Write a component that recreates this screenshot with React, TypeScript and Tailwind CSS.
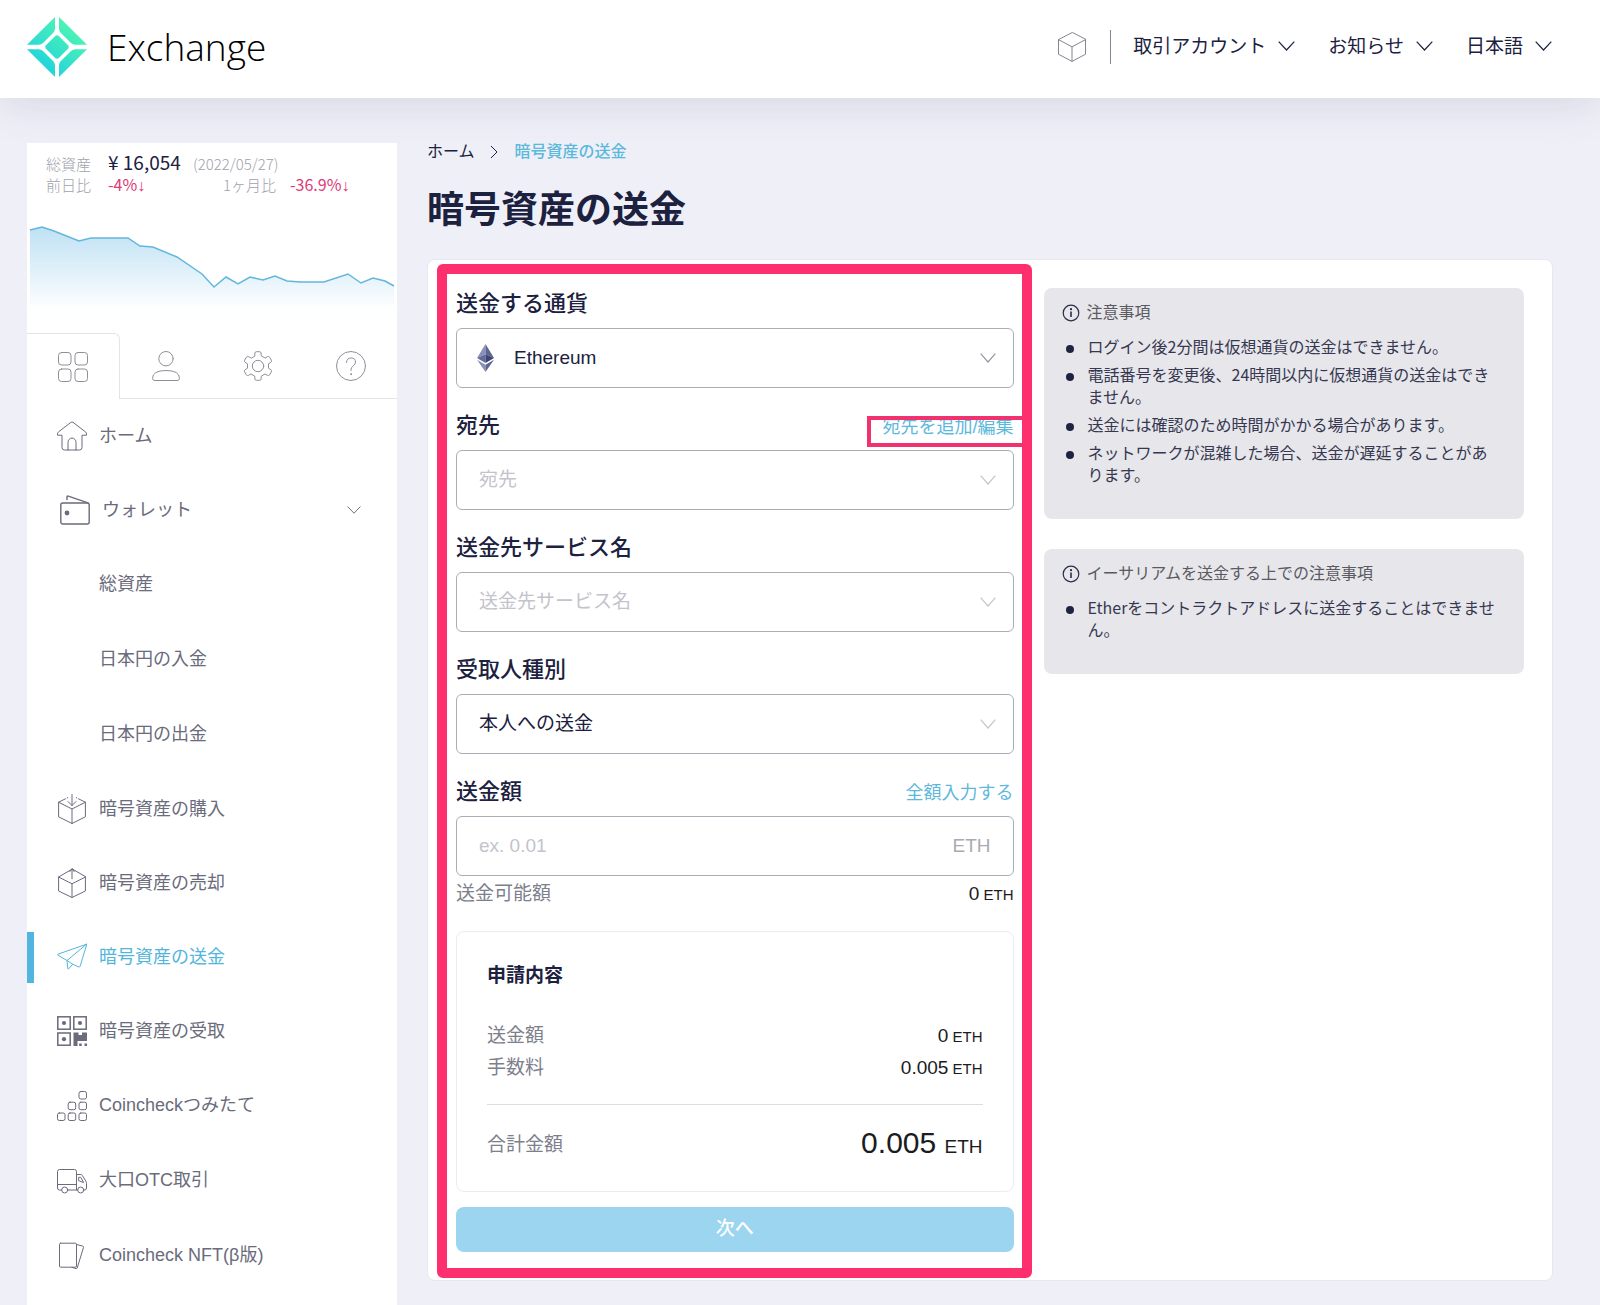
import React, { useState } from 'react';

const ICON = {
  width: 30,
  height: 30,
  viewBox: '0 0 30 30',
  fill: 'none',
  stroke: 'currentColor',
  strokeWidth: 1,
  strokeLinejoin: 'round' as const,
  strokeLinecap: 'round' as const,
  'aria-hidden': true,
};

const HomeIcon = () => (
  <svg {...ICON}>
    <path d="M14 1.3q1-.7 2 0L28.6 11q.9.7.9 1.8v1.4H25v12.3q0 2.5-2.5 2.5h-15Q5 29 5 26.5V14.2H.5v-1.4q0-1.1.9-1.8z" />
    <path d="M11 29v-7.5a4 4.5 0 0 1 8 0V29" />
  </svg>
);

const WalletIcon = () => (
  <svg {...ICON} strokeWidth={1.4}>
    <rect x="0.8" y="8" width="28.4" height="21" rx="2" />
    <path d="M7 4.5V2q0-1.3 1.3-.8L28 7.8" />
    <circle cx="7" cy="18" r="2.4" fill="currentColor" stroke="none" />
  </svg>
);

const BuyIcon = () => (
  <svg {...ICON}>
    <path d="M8.5 4.8 1.6 8.2v14.6L15 29.5l13.4-6.7V8.2l-6.9-3.4" />
    <path d="M1.6 8.2 15 15l13.4-6.8M15 15v14.5M15 .5v11M11 7.5l4 4 4-4M10.8 3.6l-.6.3M19.2 3.6l.6.3" />
  </svg>
);

const SellIcon = () => (
  <svg {...ICON}>
    <path d="M15 1.2 1.6 9v14L15 29.5 28.4 23V9z" />
    <path d="M1.6 9 15 15.8 28.4 9M15 15.8v13.7M15 .8v10M12.8 3.6 15 .8l2.2 2.8" />
  </svg>
);

const CubeIcon = () => (
  <svg {...ICON}>
    <path d="M15 .6 1.5 7.6v14.6L15 29.4l13.5-7.2V7.6z" />
    <path d="M1.5 7.6 15 14.8l13.5-7.2M15 14.8v14.6" />
  </svg>
);

const SendIcon = () => (
  <svg {...ICON}>
    <path d="M29.5 2.2.9 12.2q-.8.4 0 1l9.1 5.3.8 8.2q.3.8.9.1l4-4.6 6.2 2.9q.8.2 1.1-.6z" />
    <path d="M29.5 2.2 10 18.5l5.7 3.7" />
  </svg>
);

const QrIcon = () => (
  <svg {...ICON} strokeWidth={1.5} strokeLinejoin="miter">
    <rect x="0.8" y="0.8" width="12.4" height="12.4" />
    <rect x="16.8" y="0.8" width="12.4" height="12.4" />
    <rect x="0.8" y="17" width="12.4" height="12.2" />
    <g fill="currentColor" stroke="none">
      <circle cx="7" cy="7" r="2.1" />
      <circle cx="23" cy="7" r="2.1" />
      <circle cx="7" cy="23.2" r="2.1" />
      <path d="M16.500 16.500h5v2.500h3.500v-2.500h5V25h-9.500v5h-4z" />
      <path d="M22.200 27.500h2.500V30h-2.500zM27.500 27.500H30V30h-2.500z" />
    </g>
  </svg>
);

const StackIcon = () => (
  <svg {...ICON}>
    {[[22, 0.5], [11.2, 11.2], [22, 11.2], [0.5, 22], [11.2, 22], [22, 22]].map(([x, y]) => (
      <rect key={`${x}-${y}`} x={x} y={y} width="7.5" height="7.5" rx="1.8" />
    ))}
  </svg>
);

const TruckIcon = () => (
  <svg {...ICON}>
    <path d="M4.600 24H2.500Q.5 24 .5 22V5.500q0-2 2-2h15q2 0 2 2V24H10.800M.5 18.500h19M19.500 8.500h4.300q1 0 1.500.9l3.700 6q.5.9.5 1.900V22q0 2-2 2h-.7M20.600 24h-1.100" />
    <path d="M22 11.300h1.700l3 5.200L22 14.800z" />
    <circle cx="7.7" cy="24" r="3" />
    <circle cx="23.700" cy="24" r="3" />
  </svg>
);

const CardsIcon = () => (
  <svg {...ICON}>
    <rect x="2.500" y="2.200" width="17" height="24" rx="1.200" />
    <path d="m19.500 3.500 6.300 1.600q1 .3.700 1.300L20.200 27q-.3.800-1.200.6l-4-1.200" />
  </svg>
);

const GridIcon = () => (
  <svg {...ICON}>
    <rect x="0.5" y="0.5" width="12.500" height="12.500" rx="3" />
    <rect x="17" y="0.5" width="12.500" height="12.500" rx="3" />
    <rect x="0.5" y="17" width="12.500" height="12.500" rx="3" />
    <rect x="17" y="17" width="12.500" height="12.500" rx="3" />
  </svg>
);

const PersonIcon = () => (
  <svg {...ICON}>
    <circle cx="15" cy="7.700" r="7.200" />
    <path d="M3.500 29.500q-2 0-2-2 0-8 13.500-8t13.500 8q0 2-2 2z" />
  </svg>
);

const GearIcon = () => (
  <svg {...ICON}>
    <g transform="translate(15 15)">
      <path d="M-3.200-10.200-3.100-13q.2-1.300 1.500-1.300h3.200q1.300 0 1.500 1.300l.1 2.800L7-8l2.600-1.400q1.300-.6 2 .5l1.800 3.100q.6 1.200-.4 2L10.500-2.200v4.400L13 3.800q1 .8.4 2l-1.800 3.100q-.7 1.100-2 .5L7 8l-3.800 2.200-.1 2.800q-.2 1.300-1.500 1.300h-3.200q-1.300 0-1.500-1.300l-.1-2.800L-7 8l-2.600 1.400q-1.300.6-2-.5l-1.800-3.100q-.6-1.200.4-2l2.500-1.600v-4.400L-13-3.800q-1-.8-.4-2l1.800-3.100q.7-1.100 2-.5L-7-8z" />
      <circle r="5.700" />
    </g>
  </svg>
);

const HelpIcon = () => (
  <svg {...ICON}>
    <circle cx="15" cy="15" r="14.500" />
    <path d="M10.500 11.500q0-4.500 4.700-4.500 4.300 0 4.300 4 0 2.200-2.200 3.800-2.300 1.600-2.300 4v.7" />
    <circle cx="15" cy="23.200" r="0.500" fill="currentColor" />
  </svg>
);

const InfoIcon = () => (
  <svg width="18" height="18" viewBox="0 0 18 18" fill="none" stroke="currentColor" strokeWidth="1.200" aria-hidden>
    <circle cx="9" cy="9" r="7.800" />
    <path d="M9 7.500v5.500" strokeWidth="1.600" />
    <circle cx="9" cy="5.200" r="0.500" fill="currentColor" />
  </svg>
);

const Chevron = ({ size = 'h-[10px] w-[17px]', className = '' }: { size?: string; className?: string }) => (
  <svg
    viewBox="0 0 17 10"
    preserveAspectRatio="none"
    fill="none"
    stroke="currentColor"
    className={`${size} ${className}`}
    aria-hidden
  >
    <path d="m.7.700 7.800 8.300L16.300.7" strokeWidth="1.200" />
  </svg>
);

const EthIcon = () => (
  <svg width="17" height="28" viewBox="0 0 17 28" aria-hidden>
    <path fill="#8a90b8" d="M8.500 0 0 14l8.500-3.800z" />
    <path fill="#5d6592" d="M8.500 0 17 14l-8.500-3.800z" />
    <path fill="#636a98" d="M8.500 10.200 0 14l8.500 5z" />
    <path fill="#3d4374" d="M8.500 10.200 17 14l-8.500 5z" />
    <path fill="#8a90b8" d="M0 15.800 8.500 28v-7.200z" />
    <path fill="#5d6592" d="M17 15.800 8.500 28v-7.200z" />
  </svg>
);

const Logo = () => (
  <svg width="60" height="60" viewBox="0 0 60 60" aria-hidden>
    <defs>
      <linearGradient id="logo-fill" gradientUnits="userSpaceOnUse" x1="46" y1="10" x2="14" y2="50">
        <stop offset="0" stopColor="#4cf5b2" />
        <stop offset="1" stopColor="#22d3dc" />
      </linearGradient>
    </defs>
    <g fill="url(#logo-fill)">
      <path d="M28 0v11.500q0 2.500-1.700 4.200L16 26q-1.800 1.800-4.300 1.800H0z" />
      <path d="M32 0v11.500q0 2.500 1.700 4.200L44 26q1.800 1.800 4.300 1.800H60z" />
      <path d="M28 60V48.500q0-2.500-1.700-4.200L16 34q-1.800-1.800-4.300-1.800H0z" />
      <path d="M32 60V48.500q0-2.500 1.700-4.200L44 34q1.800-1.800 4.300-1.800H60z" />
      <path d="M28.200 18.900q1.800-1.400 3.600 0l9.300 9.300q1.400 1.800 0 3.600l-9.300 9.300q-1.800 1.400-3.600 0l-9.300-9.300q-1.400-1.800 0-3.600z" />
    </g>
  </svg>
);

const LINE =
  'M3 27 15 24 27 28 52 38 64 35H101L113 43 126 44 150 54 175 71 187 84 199 74 211 81 223 74 236 77 248 73 260 78 273 79H297L321 71 334 80 346 75 358 78 367 83';

const AssetChart = () => (
  <svg className="mt-2 block h-[130px] w-full" viewBox="0 0 370 130" preserveAspectRatio="none" aria-hidden>
    <defs>
      <linearGradient id="chart-fill" gradientUnits="userSpaceOnUse" x1="0" y1="24" x2="0" y2="108">
        <stop offset="0" stopColor="#bfe1f4" />
        <stop offset="1" stopColor="#ffffff" />
      </linearGradient>
    </defs>
    <path d={`${LINE}V108H3z`} fill="url(#chart-fill)" />
    <path d={LINE} fill="none" stroke="#62b7dc" strokeWidth="1.500" />
  </svg>
);

const NAV_LINK = 'flex items-center gap-3 pl-[30px] text-[18px]';

const tradeItems = [
  { label: '暗号資産の購入', icon: <BuyIcon /> },
  { label: '暗号資産の売却', icon: <SellIcon /> },
  { label: '暗号資産の送金', icon: <SendIcon />, active: true },
  { label: '暗号資産の受取', icon: <QrIcon /> },
];

const serviceItems = [
  { label: 'Coincheckつみたて', icon: <StackIcon /> },
  { label: '大口OTC取引', icon: <TruckIcon /> },
  { label: 'Coincheck NFT(β版)', icon: <CardsIcon /> },
];

const Sidebar = () => (
  <aside className="w-[370px] shrink-0 bg-white text-[#6a6b7b]">
    <div className="pt-2 pl-[19px] font-['Noto_Sans_CJK_JP',sans-serif] text-[15px] leading-[22px] font-light text-[#a0a1ac]">
      <div className="flex h-[22px] items-baseline">
        <span className="w-[62px]">総資産</span>
        <span className="w-[85px] text-[19px] font-normal text-[#1c2140]">¥ 16,054</span>
        <span>(2022/05/27)</span>
      </div>
      <div className="flex h-[22px] items-baseline">
        <span className="w-[62px]">前日比</span>
        <span className="w-[115px] text-[16px] font-normal text-[#dc3a77]">
          -4%<span className="font-['Liberation_Sans']">↓</span>
        </span>
        <span className="w-[67px]">1ヶ月比</span>
        <span className="text-[16px] font-normal text-[#dc3a77]">
          -36.9%<span className="font-['Liberation_Sans']">↓</span>
        </span>
      </div>
    </div>
    <AssetChart />
    <div className="grid h-[66px] grid-cols-4 text-[#8f8f97]">
      <button type="button" aria-label="メニュー" className="flex items-center justify-center rounded-tr-md border-t border-r border-[#e3e3ea]">
        <GridIcon />
      </button>
      <button type="button" aria-label="アカウント" className="flex items-center justify-center border-b border-[#e3e3ea]">
        <PersonIcon />
      </button>
      <button type="button" aria-label="設定" className="flex items-center justify-center border-b border-[#e3e3ea]">
        <GearIcon />
      </button>
      <button type="button" aria-label="ヘルプ" className="flex items-center justify-center border-b border-[#e3e3ea]">
        <HelpIcon />
      </button>
    </div>

    <nav>
      <a href="#home" className={`${NAV_LINK} h-[74px]`}>
        <HomeIcon />
        ホーム
      </a>
      <button type="button" className="flex h-[74px] w-full items-center gap-3 pr-9 pl-[33px] text-left text-[18px]">
        <WalletIcon />
        <span className="flex-1">ウォレット</span>
        <Chevron size="h-2 w-[14px]" />
      </button>
      {['総資産', '日本円の入金', '日本円の出金'].map((label) => (
        <a key={label} href="#wallet" className="flex h-[75px] items-center pl-[72px] text-[18px]">
          {label}
        </a>
      ))}
      {tradeItems.map((item) => (
        <a
          key={item.label}
          href="#trade"
          className={item.active ? `${NAV_LINK} relative h-[74px] text-[#52b5dc]` : `${NAV_LINK} h-[74px]`}
        >
          {item.active && <span className="absolute left-0 h-[51px] w-[7px] bg-[#52b5e0]" />}
          {item.icon}
          {item.label}
        </a>
      ))}
      {serviceItems.map((item) => (
        <a key={item.label} href="#service" className={`${NAV_LINK} h-[75px]`}>
          {item.icon}
          {item.label}
        </a>
      ))}
    </nav>
  </aside>
);

const Header = () => (
  <header className="flex h-[98px] items-center justify-between bg-white pr-12 pb-1 pl-[27px] shadow-[0_6px_44px_rgba(50,60,90,0.14)]">
    <a href="#top" className="flex items-center gap-5">
      <Logo />
      <span className="font-['Open_Sans',sans-serif] text-[37px] leading-[48px] font-light text-black">Exchange</span>
    </a>
    <div className="flex items-center text-[19px] text-[#1c2140]">
      <a href="#market" aria-label="マーケット" className="text-[#85858f]">
        <CubeIcon />
      </a>
      <span className="mr-[22px] ml-[23px] h-[34px] w-px bg-[#85858f]" />
      <div className="flex items-center gap-[33px]">
        {['取引アカウント', 'お知らせ', '日本語'].map((label) => (
          <button key={label} type="button" className="flex items-center gap-3">
            {label}
            <Chevron className="mb-[3px]" />
          </button>
        ))}
      </div>
    </div>
  </header>
);

const FIELD = 'h-[60px] w-full rounded-md border border-[#abacb6] bg-white text-[19px]';

interface SelectFieldProps {
  id: string;
  label: string;
  option: string;
  muted?: boolean;
  icon?: React.ReactNode;
  children?: React.ReactNode;
}

const SelectField = ({ id, label, option, muted, icon, children }: SelectFieldProps) => (
  <div className="mb-[22px]">
    <div className="relative mb-2 flex h-8 items-baseline justify-between leading-8">
      <label htmlFor={id} className="text-[22px] font-medium">
        {label}
      </label>
      {children}
    </div>
    <div className="relative">
      {icon && <span className="pointer-events-none absolute top-4 left-[21px]">{icon}</span>}
      <select
        id={id}
        className={`${FIELD} appearance-none ${icon ? 'pl-[57px]' : 'pl-[22px]'} ${muted ? 'text-[#c3c4cb]' : 'text-[#1c2140]'}`}
      >
        <option>{option}</option>
      </select>
      <Chevron
        size="h-[10px] w-4"
        className={`pointer-events-none absolute top-[25px] right-[18px] ${icon ? 'text-[#92939f]' : 'text-[#c3c4cb]'}`}
      />
    </div>
  </div>
);

const Amount = ({ value }: { value: string }) => (
  <span className="text-[19px] text-[#1b1b22]">
    {value}
    <span className="text-[15px]"> ETH</span>
  </span>
);

const SendForm = () => {
  const [amount, setAmount] = useState('');

  return (
    <form className="relative">
      <SelectField id="currency" label="送金する通貨" option="Ethereum" icon={<EthIcon />} />
      <SelectField id="address" label="宛先" option="宛先" muted>
        <a href="#address" className="text-[18px] text-[#5cb8dc]">
          宛先を追加/編集
        </a>
        <span className="pointer-events-none absolute top-[6px] -right-2 -bottom-[5px] w-[155px] border-4 border-r-0 border-[#f0336f]" />
      </SelectField>
      <SelectField id="service" label="送金先サービス名" option="送金先サービス名" muted />
      <SelectField id="recipient" label="受取人種別" option="本人への送金" />

      {/* 送金額 */}
      <div className="mb-2 flex h-8 items-baseline justify-between leading-8">
        <label htmlFor="amount" className="text-[22px] font-medium">
          送金額
        </label>
        <button type="button" className="text-[18px] text-[#5cb8dc]">
          全額入力する
        </button>
      </div>
      <div className="relative">
        <input
          id="amount"
          type="text"
          value={amount}
          onChange={(e) => setAmount(e.target.value)}
          placeholder="ex. 0.01"
          className={`${FIELD} pr-20 pl-[22px] placeholder:text-[#c3c4cb]`}
        />
        <span className="pointer-events-none absolute top-4 right-[23px] text-[19px] leading-7 text-[#a9aab3]">ETH</span>
      </div>
      <div className="flex h-9 items-baseline justify-between leading-9">
        <span className="text-[19px] text-[#7e7f8d]">送金可能額</span>
        <Amount value="0" />
      </div>

      {/* 申請内容 */}
      <section className="mt-[19px] rounded-lg border border-[#ececf1] px-[30px] pt-7 pb-[30px] leading-8">
        <h2 className="mb-7 text-[19px] font-bold">申請内容</h2>
        <div className="flex h-8 items-baseline justify-between">
          <span className="text-[19px] text-[#7e7f8d]">送金額</span>
          <Amount value="0" />
        </div>
        <div className="flex h-8 items-baseline justify-between">
          <span className="text-[19px] text-[#7e7f8d]">手数料</span>
          <Amount value="0.005" />
        </div>
        <hr className="mt-5 mb-6 border-[#dcdce2]" />
        <div className="flex h-8 items-center justify-between">
          <span className="text-[19px] text-[#7e7f8d]">合計金額</span>
          <span className="text-[30px] text-[#1b1b22]">
            0.005 <span className="text-[19px]">ETH</span>
          </span>
        </div>
      </section>
      <button type="submit" className="mt-[15px] h-[45px] w-full rounded-lg bg-[#9bd5ef] text-[19px] font-medium text-white">
        次へ
      </button>

      <span className="pointer-events-none absolute -top-6 -right-[18px] -bottom-[26px] -left-[19px] rounded-md border-10 border-[#fd2f6f]" />
    </form>
  );
};

const notices = [
  {
    title: '注意事項',
    items: [
      'ログイン後2分間は仮想通貨の送金はできません。',
      '電話番号を変更後、24時間以内に仮想通貨の送金はできません。',
      '送金には確認のため時間がかかる場合があります。',
      'ネットワークが混雑した場合、送金が遅延することがあります。',
    ],
  },
  {
    title: 'イーサリアムを送金する上での注意事項',
    items: ['Etherをコントラクトアドレスに送金することはできません。'],
  },
];

const Notices = () => (
  <div className="flex flex-col gap-[30px] font-['Noto_Sans_CJK_JP',sans-serif] text-[16px]">
    {notices.map((notice) => (
      <section key={notice.title} className="rounded-lg bg-[#e7e6eb] pt-[11px] pr-6 pb-[34px] pl-[18px]">
        <h2 className="flex items-center gap-[7px] leading-6 text-[#5a5a62]">
          <span className="pt-1 text-[#2a2d48]">
            <InfoIcon />
          </span>
          {notice.title}
        </h2>
        <ul className="mt-3 flex flex-col gap-[6px] pl-1 leading-[22px] text-[#353850]">
          {notice.items.map((item) => (
            <li key={item} className="flex gap-[14px]">
              <span className="mt-[10px] h-2 w-2 shrink-0 rounded-full bg-[#1f2340]" />
              <span>{item}</span>
            </li>
          ))}
        </ul>
      </section>
    ))}
  </div>
);

export default function App() {
  return (
    <div className="flex min-h-screen flex-col bg-[#eff0f7] font-['Liberation_Sans','Noto_Sans_CJK_JP',sans-serif] text-[#1c2140]">
      <Header />
      <div className="flex flex-1 gap-[30px] pt-[45px] pr-[47px] pl-[27px]">
        <Sidebar />
        <main className="min-w-0 flex-1 pb-6">
          <div className="flex items-center text-[16px] leading-[18px]">
            <a href="#home">ホーム</a>
            <svg className="mr-[17px] ml-[15px]" width="8" height="14" viewBox="0 0 8 14" fill="none" stroke="currentColor" aria-hidden>
              <path d="m1 1 6 6-6 6" />
            </svg>
            <span className="font-medium text-[#5cb8dc]">暗号資産の送金</span>
          </div>
          <h1 className="mt-[25px] mb-[23px] text-[37px] leading-[50px] font-bold">暗号資産の送金</h1>
          <div className="grid grid-cols-[minmax(0,557fr)_minmax(0,480fr)] items-start gap-[30px] rounded-lg border border-[#e6e7ef] bg-white p-7">
            <SendForm />
            <Notices />
          </div>
        </main>
      </div>
    </div>
  );
}
